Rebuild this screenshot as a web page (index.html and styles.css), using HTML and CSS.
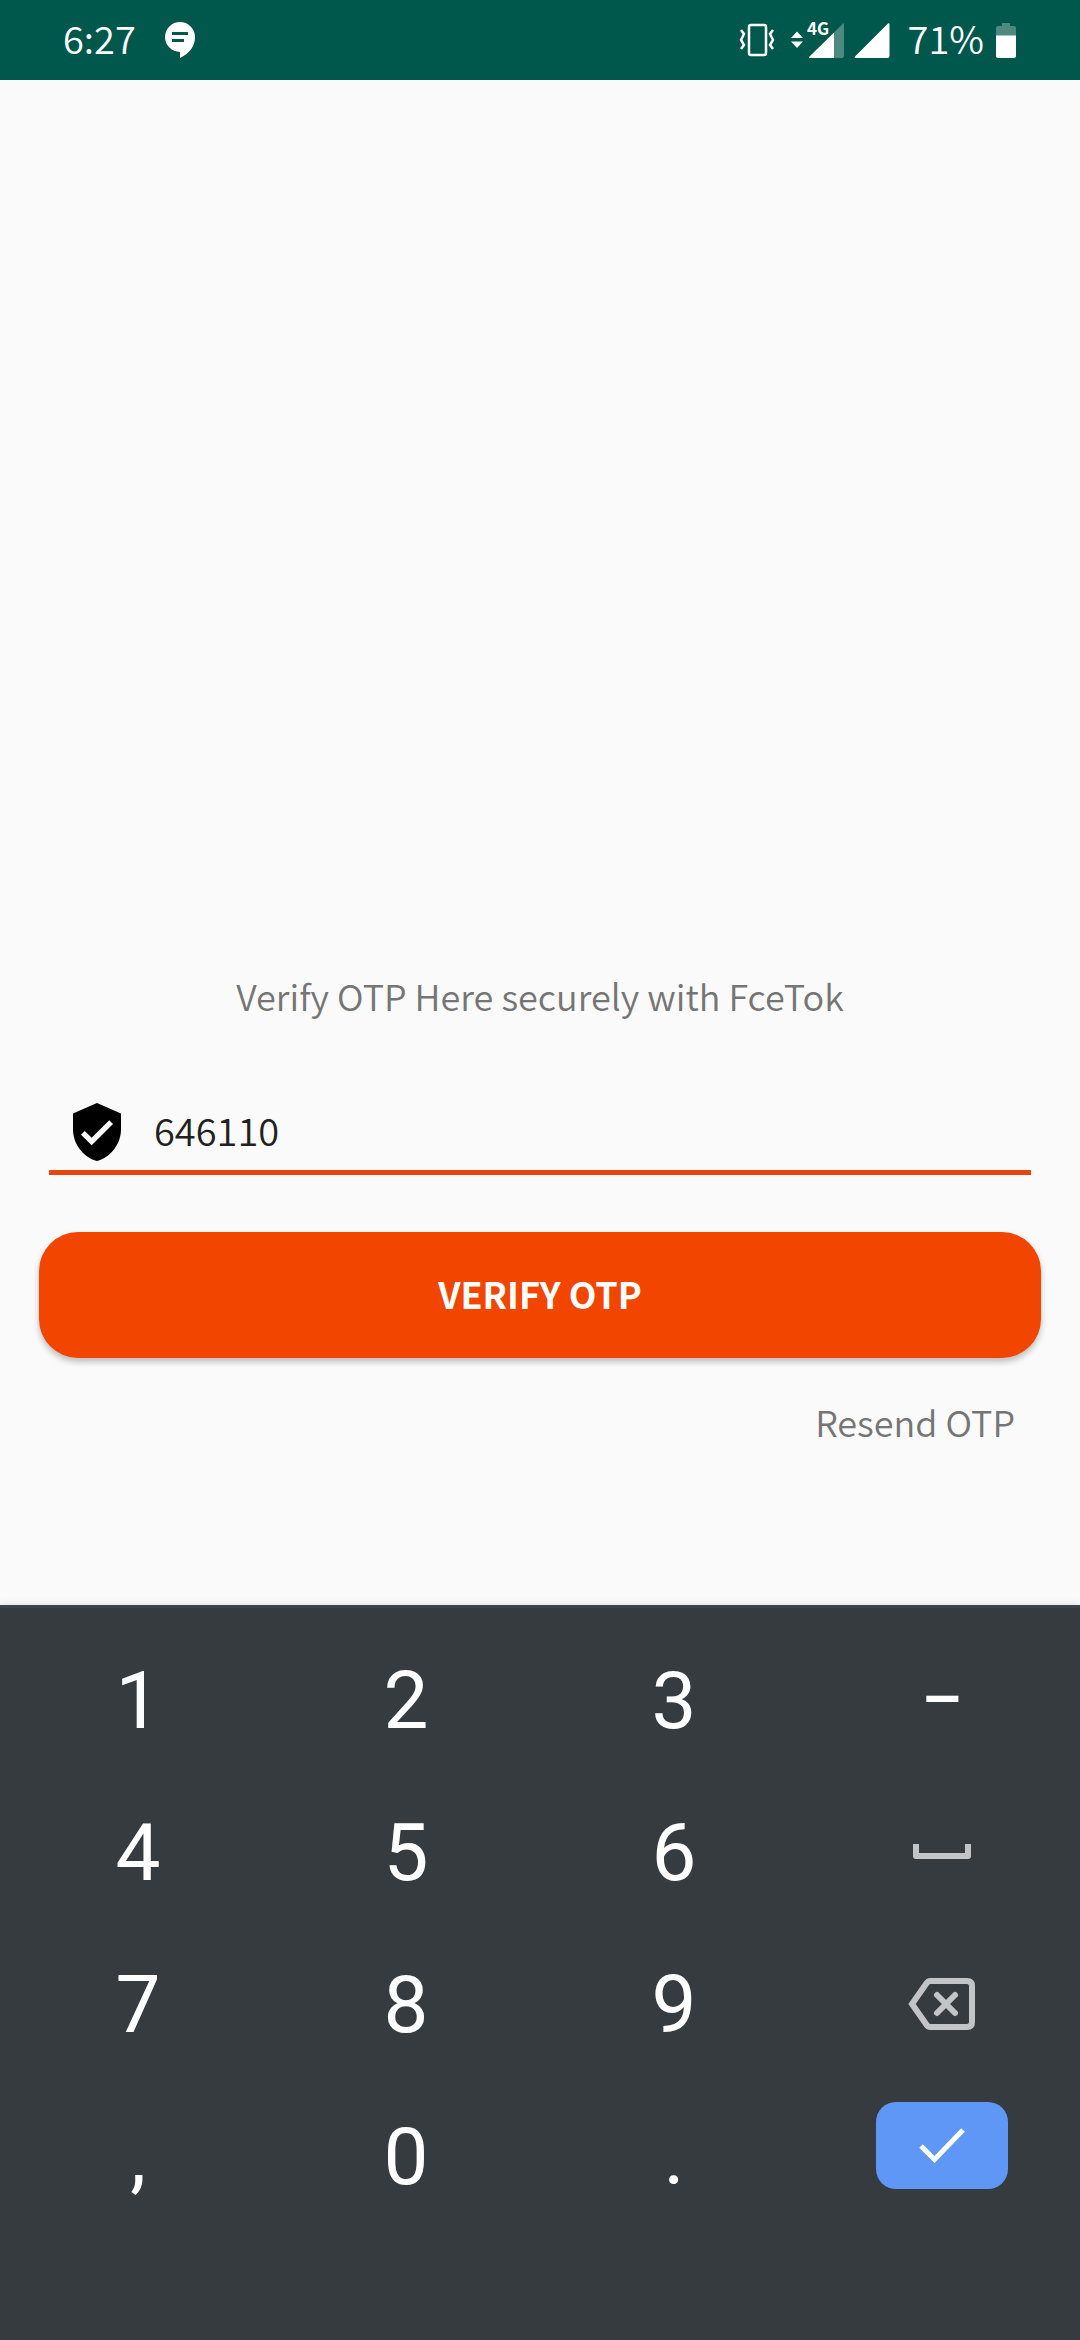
FILE: index.html
```html
<!DOCTYPE html>
<html lang="en">
<head>
<meta charset="utf-8">
<meta name="viewport" content="width=device-width, initial-scale=1">
<title>Verify OTP</title>
<link rel="stylesheet" href="styles.css">
</head>
<body>
<div class="screen">
  <header class="status">
    <div class="status-left">
      <span class="status-text">6:27</span>
      <svg width="32" height="36" viewBox="0 0 32 36" aria-hidden="true">
        <path fill="#fff" d="M16 0a15 15 0 0 1 15 15c0 9-5 16-15 21v-6A15 15 0 0 1 16 0z"/>
        <path stroke="#00574b" stroke-width="3" d="M8 11.500h16M8 18.500h12"/>
      </svg>
    </div>
    <div class="status-right">
      <svg class="vibrate" width="36" height="34" viewBox="0 0 36 34" fill="none" stroke="#fff" aria-hidden="true">
        <rect x="10" y="2" width="17" height="30" rx="2" stroke-width="2.500"/>
        <path stroke-width="2.500" d="M2 7l3 4-3 6 3 5-3 4M34 7l-3 4 3 6-3 5 3 4"/>
      </svg>
      <svg class="cell" width="54" height="36" viewBox="0 0 54 36" fill="#fff" aria-hidden="true">
        <path d="M1 16l6-6.500 6 6.500zM1 19.500h12l-6 6.500z"/>
        <path fill="#4d8980" d="M44 10.500L53 1.500q1-1 1 1V34q0 2-2 2h-8z"/>
        <path d="M44 10.500V36H20q-2 0-.5-1.500z"/>
        <text class="network" x="17" y="13">4G</text>
      </svg>
      <svg class="signal" width="36" height="36" viewBox="0 0 36 36" fill="#fff" aria-hidden="true">
        <path d="M1 34.500L34 1.500q1.500-1 1.500 1V34q0 2-2 2H2q-2 0-1-1.500z"/>
      </svg>
      <span class="status-text">71%</span>
      <svg class="battery" width="20" height="36" viewBox="0 0 20 36" aria-hidden="true">
        <path fill="#4d8980" d="M6 1h8v3h4q2 0 2 2v8H0V6q0-2 2-2h4z"/>
        <path fill="#fff" d="M0 13.500h20V34q0 2-2 2H2q-2 0-2-2z"/>
      </svg>
    </div>
  </header>

  <main class="content">
    <h1 class="title">Verify OTP Here securely with FceTok</h1>
    <form class="form">
      <div class="field">
        <svg width="48" height="58" viewBox="3 1 18 22" preserveAspectRatio="none" aria-hidden="true">
          <path d="M12 1L3 5v6c0 5.550 3.840 10.740 9 12 5.160-1.260 9-6.450 9-12V5l-9-4zm-2 16l-4-4 1.410-1.410L10 14.170l6.590-6.590L18 9l-8 8z"/>
        </svg>
        <input class="code" type="text" inputmode="numeric" value="646110" aria-label="OTP code">
      </div>
      <button class="verify" type="button">VERIFY OTP</button>
      <a class="resend" href="#">Resend OTP</a>
    </form>
  </main>

  <div class="keyboard">
    <button class="key" type="button">1</button>
    <button class="key" type="button">2</button>
    <button class="key" type="button">3</button>
    <button class="key dash" type="button">–</button>
    <button class="key" type="button">4</button>
    <button class="key" type="button">5</button>
    <button class="key" type="button">6</button>
    <button class="key" type="button" aria-label="Space">
      <svg width="60" height="18" viewBox="0 0 60 18" fill="none" stroke="#c3c4c6" stroke-width="6" stroke-linejoin="round"><path d="M4 0v12h52V0"/></svg>
    </button>
    <button class="key" type="button">7</button>
    <button class="key" type="button">8</button>
    <button class="key" type="button">9</button>
    <button class="key" type="button" aria-label="Backspace">
      <svg width="68" height="54" viewBox="0 0 68 54" fill="none" stroke="#c3c4c6" stroke-width="6" stroke-linejoin="round" stroke-linecap="round"><path d="M22 3h37q5 0 5 5v36q0 5-5 5H22q-2 0-4-3L4 26 18 6q2-3 4-3z" stroke-linejoin="miter"/><path d="M29 17l18 18M47 17l-18 18"/></svg>
    </button>
    <button class="key" type="button">,</button>
    <button class="key" type="button">0</button>
    <button class="key" type="button">.</button>
    <button class="key enter" type="button" aria-label="Done">
      <svg width="48" height="36" viewBox="0 0 48 36" fill="none" stroke="#fff" stroke-width="5"><path d="M3 18l13.500 13.500L45 2"/></svg>
    </button>
  </div>
</div>
</body>
</html>
```
FILE: styles.css
```css
* {
  box-sizing: border-box;
}

body {
  margin: 0;
  background: #fafafa;
  font-family: "Noto Sans CJK SC DemiLight", "Noto Sans CJK SC", "Noto Sans", sans-serif;
  font-weight: 350;
  font-size: 36px;
  line-height: 48px;
}

svg {
  display: block;
  flex: none;
  overflow: visible;
}

button,
input {
  margin: 0;
  padding: 0;
  border: 0;
  background: none;
  font: inherit;
}

.screen {
  display: flex;
  flex-direction: column;
  min-height: 100vh;
}

.status {
  display: flex;
  justify-content: space-between;
  align-items: center;
  height: 80px;
  padding: 0 64px 0 63px;
  background: #00574b;
  color: #fff;
}

.status-left,
.status-right {
  display: flex;
  align-items: center;
}

.status-left {
  gap: 28px;
}

.status-text {
  padding-bottom: 4px;
  font-size: 38px;
}

.vibrate {
  margin-right: 15px;
}

.cell {
  margin-right: 10px;
}

.signal {
  margin-right: 18px;
}

.battery {
  margin-left: 12px;
}

.network {
  font-family: "Noto Sans CJK SC", "Noto Sans", sans-serif;
  font-size: 17px;
  font-weight: 700;
}

.content {
  flex: 1;
  display: flex;
  flex-direction: column;
  justify-content: flex-end;
  padding: 0 39px 160px;
}

.title {
  margin: 0 0 75px;
  color: #757575;
  font-size: inherit;
  font-weight: inherit;
  text-align: center;
}

.form {
  display: flex;
  flex-direction: column;
}

.field {
  display: flex;
  align-items: center;
  gap: 33px;
  height: 81px;
  margin: 0 10px 57px;
  padding-left: 24px;
  border-bottom: 5px solid #e8450c;
}

.code {
  flex: 1;
  min-width: 0;
  padding-bottom: 4px;
  color: #212121;
  font-size: 38px;
  outline: none;
}

.verify {
  height: 126px;
  padding-bottom: 4px;
  border-radius: 39px;
  background: #f24500;
  box-shadow: 0 4px 6px rgba(0, 0, 0, 0.24);
  color: #fff;
  font-family: "Noto Sans CJK SC", "Noto Sans", sans-serif;
  font-weight: 700;
}

.resend {
  align-self: flex-end;
  margin: 39px 26px 0 0;
  color: #757575;
  text-decoration: none;
}

.keyboard {
  display: grid;
  grid-template-columns: repeat(4, 1fr);
  grid-auto-rows: 152px;
  padding: 17px 4px 107px;
  border-top: 3px solid #3d4347;
  background: #363b3f;
  box-shadow: 0 0 8px rgba(0, 0, 0, 0.12);
}

.key {
  display: flex;
  justify-content: center;
  align-items: center;
  color: #fff;
  font-family: Roboto, sans-serif;
  font-size: 80px;
  font-weight: 400;
  line-height: 96px;
}

.dash {
  font-size: 64px;
  font-weight: 500;
}

.enter {
  justify-self: center;
  width: 132px;
  height: 87px;
  margin-top: 21px;
  border-radius: 20px;
  background: #5e97f6;
}
```
